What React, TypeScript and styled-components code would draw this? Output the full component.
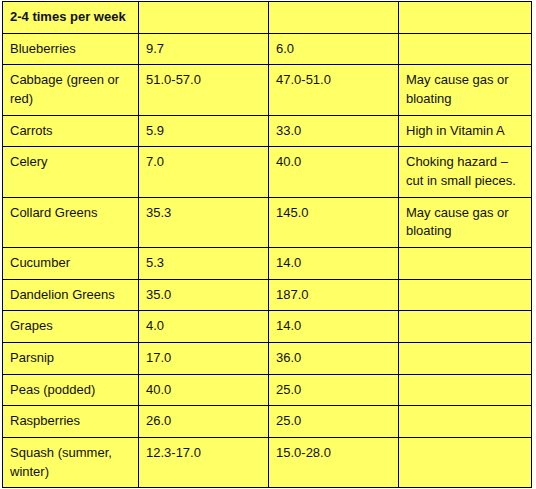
import styled, { createGlobalStyle } from "styled-components";

const GlobalStyle = createGlobalStyle`
  html, body {
    margin: 0;
    padding: 0;
    background: #ffffff;
  }
  body {
    font-family: "Liberation Sans", Arial, sans-serif;
  }
`

const rows: string[][] = [
  ["Blueberries", "9.7", "6.0", ""],
  ["Cabbage (green or red)", "51.0-57.0", "47.0-51.0", "May cause gas or bloating"],
  ["Carrots", "5.9", "33.0", "High in Vitamin A"],
  ["Celery", "7.0", "40.0", "Choking hazard \u2013 cut in small pieces."],
  ["Collard Greens", "35.3", "145.0", "May cause gas or bloating"],
  ["Cucumber", "5.3", "14.0", ""],
  ["Dandelion Greens", "35.0", "187.0", ""],
  ["Grapes", "4.0", "14.0", ""],
  ["Parsnip", "17.0", "36.0", ""],
  ["Peas (podded)", "40.0", "25.0", ""],
  ["Raspberries", "26.0", "25.0", ""],
  ["Squash (summer, winter)", "12.3-17.0", "15.0-28.0", ""],
]

const colWidths = [136, 130, 130, 133]

const TableWarp = styled.div`
  padding: 1px 0 0 2px;
`

const TableBase = styled.table`
  border-collapse: collapse;
  table-layout: fixed;
  width: 530px;
  background-color: #ffff66;
  font-size: 13px;
  line-height: 18.67px;
  color: #111;
`

const Cell = styled.td<{ $bold?: boolean }>`
  border: 1px solid #000;
  padding: 6px 6px 6px 7px;
  vertical-align: top;
  font-weight: ${props => props.$bold ? 700 : 400};
`

const App = () => {
  return <>
    <GlobalStyle />
    <TableWarp>
      <TableBase>
        <colgroup>
          {colWidths.map((w, i) => <col key={i} style={{ width: w }} />)}
        </colgroup>
        <tbody>
          <tr>
            <Cell $bold>2-4 times per week</Cell>
            <Cell />
            <Cell />
            <Cell />
          </tr>
          {rows.map((row, index) => <tr key={index}>
            {row.map((text, i) => <Cell key={i}>{text}</Cell>)}
          </tr>)}
        </tbody>
      </TableBase>
    </TableWarp>
  </>
}

export default App;
